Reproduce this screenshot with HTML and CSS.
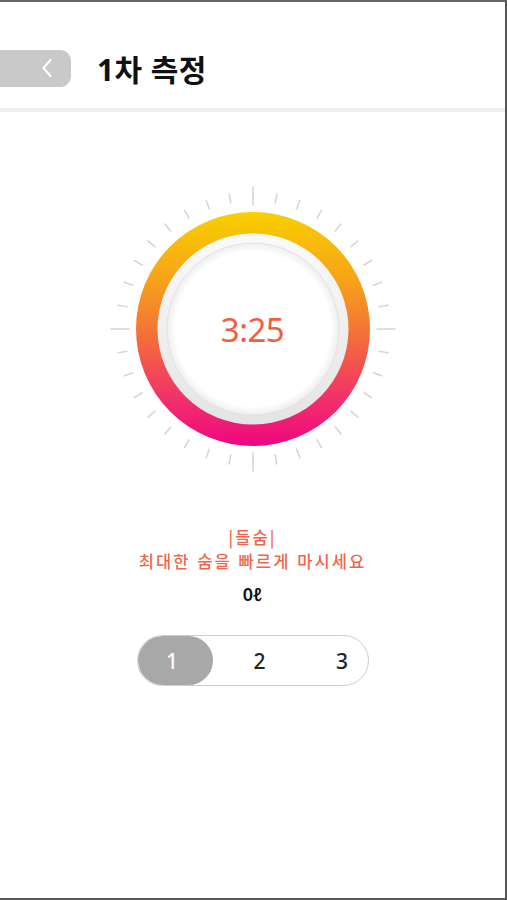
FILE: index.html
```html
<!DOCTYPE html>
<html lang="ko">
<head>
    <meta charset="UTF-8">
    <meta name="viewport" content="width=device-width, initial-scale=1.0">
    <title>1차 측정</title>
    <link rel="stylesheet" href="styles.css">
</head>
<body>
    <div class="screen">
        <header class="topbar">
            <button class="back-btn" aria-label="뒤로">
                <svg width="10" height="18" viewBox="0 0 10 18">
                    <polyline points="8.5,1 1.5,9 8.5,17" fill="none" stroke="#fff" stroke-width="2" stroke-linecap="round" stroke-linejoin="round"/>
                </svg>
            </button>
            <h1>1차 측정</h1>
        </header>

        <main class="content">
            <div class="dial">
                <svg width="300" height="300" viewBox="0 0 300 300">
                    <defs>
                        <linearGradient id="ringGrad" x1="0" y1="0" x2="0" y2="1">
                            <stop offset="0%" stop-color="#f8d000"/>
                            <stop offset="30%" stop-color="#f6a11a"/>
                            <stop offset="55%" stop-color="#f46a3c"/>
                            <stop offset="80%" stop-color="#f1306a"/>
                            <stop offset="100%" stop-color="#ee0780"/>
                        </linearGradient>
                        <linearGradient id="bezelGrad" x1="0" y1="0" x2="0" y2="1">
                            <stop offset="0%" stop-color="#fafafa"/>
                            <stop offset="100%" stop-color="#e4e4e4"/>
                        </linearGradient>
                        <radialGradient id="faceGrad" cx="0.5" cy="0.5" r="0.5">
                            <stop offset="90%" stop-color="#ffffff"/>
                            <stop offset="100%" stop-color="#eeeeee"/>
                        </radialGradient>
                    </defs>
                    <g id="ticks" stroke="#d6d6d6" stroke-width="1.6" stroke-linecap="round"></g>
                    <circle cx="150" cy="150" r="117" fill="url(#ringGrad)"/>
                    <circle cx="150" cy="150" r="95.5" fill="url(#bezelGrad)"/>
                    <circle cx="150" cy="150" r="86" fill="url(#faceGrad)" stroke="#dedede" stroke-width="0.8"/>
                </svg>
                <div class="timer">3:25</div>
            </div>

            <div class="guide">
                <p class="guide-step">|들숨|</p>
                <p class="guide-text">최대한 숨을 빠르게 마시세요</p>
            </div>
            <p class="volume">0ℓ</p>

            <div class="rounds">
                <span class="round active">1</span>
                <span class="round">2</span>
                <span class="round">3</span>
            </div>
        </main>
    </div>

    <script>
        // 눈금 그리기
        const ticks = document.getElementById('ticks');
        for (let i = 0; i < 36; i++) {
            const angle = (i * 10) * Math.PI / 180;
            const major = i % 9 === 0;
            const r1 = major ? 124 : 128;
            const r2 = major ? 142 : 137;
            const line = document.createElementNS('http://www.w3.org/2000/svg', 'line');
            line.setAttribute('x1', 150 + r1 * Math.sin(angle));
            line.setAttribute('y1', 150 - r1 * Math.cos(angle));
            line.setAttribute('x2', 150 + r2 * Math.sin(angle));
            line.setAttribute('y2', 150 - r2 * Math.cos(angle));
            ticks.appendChild(line);
        }
    </script>
</body>
</html>
```

FILE: styles.css
```css
body {
    margin: 0;
    padding: 0;
    background: #fff;
    font-family: "Noto Sans", "Noto Sans CJK KR", sans-serif;
}

.screen {
    box-sizing: border-box;
    width: 507px;
    height: 900px;
    border-top: 2px solid #666;
    border-right: 2px solid #555;
    border-bottom: 2px solid #555;
    background: #fff;
    overflow: hidden;
}

.topbar {
    display: flex;
    align-items: center;
    gap: 26px;
    height: 110px;
    padding-top: 26px;
    box-sizing: border-box;
    border-bottom: 4px solid #efefef;
}

.back-btn {
    display: flex;
    align-items: center;
    justify-content: flex-end;
    width: 71px;
    height: 37px;
    padding: 0 19px 0 0;
    border: none;
    border-radius: 0 11px 11px 0;
    background: #c9c9c9;
    cursor: pointer;
}

.topbar h1 {
    margin: 0;
    font-family: "Noto Sans", "Noto Sans CJK KR", sans-serif;
    font-size: 30px;
    font-weight: 700;
    color: #111;
    letter-spacing: 0.4px;
}

.content {
    display: flex;
    flex-direction: column;
    align-items: center;
}

.dial {
    position: relative;
    width: 300px;
    height: 300px;
    margin-top: 67px;
}

.dial svg {
    display: block;
}

.timer {
    position: absolute;
    inset: 0;
    display: flex;
    align-items: center;
    justify-content: center;
    font-family: "Noto Sans", sans-serif;
    font-size: 33px;
    color: #f0603e;
    letter-spacing: -0.5px;
}

.guide {
    margin-top: 46px;
    text-align: center;
    color: #f0664c;
    font-family: "Noto Sans CJK KR", sans-serif;
}

.guide p {
    margin: 0;
    font-size: 16.5px;
    font-weight: 500;
    line-height: 24px;
    letter-spacing: 2.1px;
}

.volume {
    margin: 9px 0 0;
    font-family: "Noto Sans", "Noto Sans CJK KR", sans-serif;
    font-size: 18px;
    font-weight: 600;
    line-height: 24px;
    color: #111;
}

.rounds {
    display: grid;
    grid-template-columns: 75px 94px 1fr;
    box-sizing: border-box;
    width: 232px;
    height: 51px;
    margin-top: 29px;
    border: 1px solid #cdcdcd;
    border-radius: 26px;
    overflow: hidden;
}

.round {
    display: flex;
    align-items: center;
    justify-content: center;
    font-family: "Noto Sans", sans-serif;
    font-size: 21px;
    font-weight: 500;
    color: #222;
}

.round.active {
    padding-right: 6px;
    background: #a8a8a8;
    color: #fff;
    border-radius: 26px;
}

.round:last-child {
    padding-left: 10px;
}
```
